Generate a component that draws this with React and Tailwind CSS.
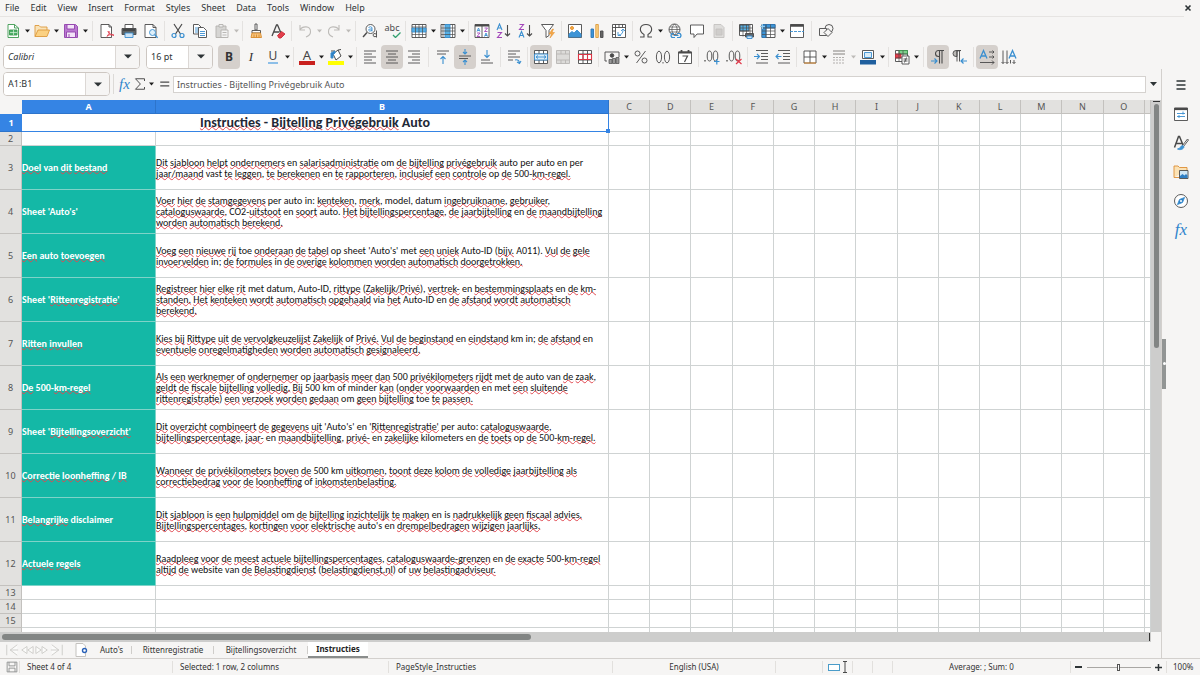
import React, { useState } from 'react';

const INK = '#4a4a4a';
const BLUE = '#3a8fd0';

const Icon = ({ children, className = 'w-4 h-4' }) => (
  <svg
    className={className}
    viewBox="0 0 16 16"
    fill="none"
    stroke={INK}
    strokeWidth="0.9"
    aria-hidden="true"
  >
    {children}
  </svg>
);

const icons = {
  new: (
    <>
      <path d="M3 1.5h6.5L13.5 5v9.5H3z" fill="#fff" stroke="#3d9a50" />
      <path d="M9.5 1.5V5h4" stroke="#3d9a50" />
      <path d="M4.5 7h7.5v5h-7.5z" fill="#4caf68" stroke="#3d9a50" />
      <path d="M5 9.5h7M8.5 7v5" stroke="#d8f0dc" strokeWidth="0.7" />
    </>
  ),
  open: (
    <>
      <path d="M1 13.5v-11h4l1.5 1.5h6.5v3" fill="#f9e3b8" stroke="#dd9a3c" />
      <path d="M1 13.5l3-6.5h11.5l-2.5 6.5z" fill="#fbd182" stroke="#dd9a3c" />
    </>
  ),
  save: (
    <>
      <path d="M1.5 1.5h11l2 2v11h-13z" fill="#b978d0" stroke="#9141ac" />
      <path d="M4 1.5h7.5v4.5h-7.5z" fill="#f3e3f8" stroke="#9141ac" />
      <path d="M3.5 14.5v-5.5h9v5.5z" fill="#f3e3f8" stroke="#9141ac" />
      <path d="M6 11v3.5" stroke="#9141ac" />
    </>
  ),
  pdf: (
    <>
      <path d="M2 1.5h8l2.5 2.5v10.5H2z" fill="#fff" />
      <path d="M10 1.5V4h2.5" />
      <path d="M10 8c1 3-1 5-2.5 6M9 8c0 3 4 3.5 6 4M8 12.5c2-1 4.500-1 7 0" stroke="#e0394a" />
    </>
  ),
  print: (
    <>
      <path d="M4 1.5h8v4H4z" fill="#fff" />
      <path d="M1 5.5h14v6H1z" fill="#5f6567" />
      <path d="M2 7h12" stroke="#3a3a3a" strokeWidth="1.4" />
      <path d="M4 10h8v4.5H4z" fill="#cfe4f4" stroke={BLUE} />
    </>
  ),
  preview: (
    <>
      <path d="M2 1.5h8l3 3v10H2z" fill="#fff" />
      <path d="M10 1.5v3h3" />
      <circle cx="9.5" cy="9.5" r="3" stroke={BLUE} fill="#dff0fa" />
      <path d="M11.7 11.7l3 3" stroke={BLUE} strokeWidth="1.3" />
    </>
  ),
  cut: (
    <>
      <path d="M4 1l6.5 10M12 1L5.5 11" stroke={INK} strokeWidth="1.2" />
      <circle cx="4" cy="12.5" r="2" stroke={BLUE} strokeWidth="1.2" />
      <circle cx="12" cy="12.5" r="2" stroke={BLUE} strokeWidth="1.2" />
    </>
  ),
  copy: (
    <>
      <path d="M1.5 1.5h5l2.5 2.5v7h-7.5z" fill="#fff" />
      <path d="M3 5h4M3 7h4M3 9h4" stroke={BLUE} />
      <path d="M6.5 4.5h5l3 3v7h-8z" fill="#fff" />
      <path d="M8 8.5h5M8 10.5h5M8 12.5h5" stroke={BLUE} />
    </>
  ),
  paste: (
    <>
      <path d="M2 3h10v11.5H2z" fill="#d6d5d3" stroke="#b3b1ae" />
      <path d="M5 1.5h4V4H5z" fill="#eee" stroke="#b3b1ae" />
      <path d="M7 7h7v7.5H7z" fill="#f4f4f4" stroke="#b3b1ae" />
      <path d="M8.5 9.5h4M8.5 12h4" stroke="#b3b1ae" />
    </>
  ),
  clone: (
    <>
      <path d="M7 1h2v6H7z" fill="#fff" />
      <path d="M4 7.5h8.5v2.5H4z" fill="#fff" />
      <path d="M4 10h8.5l1 4.5H3z" fill="#f6c37c" stroke="#d98a2b" />
      <path d="M6 11.5v3M8.5 11.5v3M11 11.5v3" stroke="#d98a2b" />
    </>
  ),
  clear: (
    <>
      <path d="M2 13L6.5 2h1L11 10M3.5 9h6" strokeWidth="1.3" />
      <path d="M7.5 12.5l4-4 3.5 2.5-4 4h-2z" fill="#e2404c" stroke="#c92a38" />
    </>
  ),
  undo: <path d="M3 2v5h5M3 7c2-4 11-5 10.5 2 0 2-2 4-4.5 5" stroke="#bdbbb8" strokeWidth="1.1" />,
  redo: <path d="M13 2v5H8M13 7C11 3 2 2 2.5 9c0 2 2 4 4.5 5" stroke="#bdbbb8" strokeWidth="1.1" />,
  find: (
    <>
      <circle cx="8.5" cy="6" r="4.5" fill="#fff" />
      <path d="M5 9.5L1 14" strokeWidth="1.4" />
      <path d="M6.5 4.5q2-1.5 3.5 0V8.5M10 6q-3.5-.5-3.5 1.2 1 2 3.5 0" stroke={BLUE} />
      <path d="M14.5 7.5v7M14.5 11q-3.5-1.5-3.5 1t3.5 1.5" />
    </>
  ),
  row: (
    <>
      <path d="M1 1.5h14v13H1z" fill="#fff" />
      <path d="M1 5h14v4H1z" fill="#56b0e4" stroke={BLUE} />
      <path d="M4.5 1.5v13M8 1.5v13M11.5 1.5v13M1 11.5h14M1 4h14" strokeWidth="0.7" />
    </>
  ),
  col: (
    <>
      <path d="M1 1.5h14v13H1z" fill="#fff" />
      <path d="M5 1.5h5v13H5z" fill="#56b0e4" stroke={BLUE} />
      <path d="M1 5h14M1 8h14M1 11.5h14M3 1.5v13M12.5 1.5v13" strokeWidth="0.7" />
    </>
  ),
  sort: (
    <>
      <path d="M1 1.5h14v13H1zM8 3v11.5" fill="#fff" />
      <path d="M1 2.5h14" strokeWidth="2" />
      <path d="M3 8.5L4.5 5 6 8.5M3.5 7.5h2M10.5 13.5L12 10l1.5 3.5M11 12.5h2" stroke={BLUE} />
      <path d="M3 10h3l-3 3.5h3M10.5 5h3l-3 3.5h3" stroke="#a347ba" />
    </>
  ),
  asc: (
    <>
      <path d="M1 7L3.5 1 6 7M2 5h3" stroke={BLUE} strokeWidth="1.1" />
      <path d="M1.5 9.5H5.5l-4 5H6" stroke="#a347ba" strokeWidth="1.1" />
      <path d="M11.5 2v11M9 10.5l2.5 2.5 2.5-2.5" strokeWidth="1.1" />
    </>
  ),
  desc: (
    <>
      <path d="M1.5 1.5H5.5l-4 5H6" stroke="#a347ba" strokeWidth="1.1" />
      <path d="M1 14.5L3.5 8.5 6 14.5M2 12.5h3" stroke={BLUE} strokeWidth="1.1" />
      <path d="M11.5 2v11M9 10.5l2.5 2.5 2.5-2.5" strokeWidth="1.1" />
    </>
  ),
  filter: (
    <>
      <path d="M1.5 1.5h12l-4.5 6v5l-3 2v-7z" fill="#fff" />
      <path d="M12.5 6l-3.5 5h2.5l-1.5 4 4.5-5.5h-2.5l1.5-3.5z" fill="#f5a94a" stroke="#e28a24" strokeWidth="0.5" />
    </>
  ),
  image: (
    <>
      <path d="M1.5 1.5h13v13h-13z" fill="#fff" />
      <circle cx="5" cy="5" r="1.5" fill="#f5b04a" stroke="#e28a24" />
      <path d="M2 13v-2l3-2.5 2 1.5 3-3 4 4v3H2z" fill="#3d94d6" stroke={BLUE} />
    </>
  ),
  chart: (
    <>
      <path d="M2 6h2.5v8.5H2z" fill="#3d94d6" stroke="#2c77b5" />
      <path d="M6.8 1.5h2.5v13H6.8z" fill="#fbd182" stroke="#dd9a3c" />
      <path d="M11.5 8h2.5v6.5h-2.5z" fill="#666" />
    </>
  ),
  pivot: (
    <>
      <path d="M1.5 1.5h13v13h-13zM1.5 4.5h13M4.5 1.5v13M8 1.5v3M11.5 1.5v3M1.5 8h3M1.5 11.5h3" fill="#fff" />
      <path d="M7 9v3.5h3M7.5 12c3 0 4.5-2 4.5-5M10 8l2-2 2 2" stroke={BLUE} />
    </>
  ),
  omega: <path d="M2 14h4v-2.5C0 8 2 1.5 8 1.5s8 6.5 2 10V14h4" strokeWidth="1.1" />,
  link: (
    <>
      <circle cx="7.5" cy="6.5" r="5.5" fill="#fff" />
      <path d="M2 6.5h11M7.5 1c-3.5 3-3.5 8 0 11M7.5 1c3.5 3 3.5 8 0 11M3 4h9M3 9h9" strokeWidth="0.7" />
      <path d="M7 10.5H5q-2 2 0 4h3M10 10.5h3q2 2 0 4h-3M7 12.5h4.5" stroke={BLUE} strokeWidth="1.2" />
    </>
  ),
  comment: <path d="M1.5 2h13v9H8l-3 3.5V11H1.5z" fill="#fff" />,
  header: (
    <>
      <path d="M3 1.5h7l3 3v10H3z" fill="#dedddb" stroke="#c4c2bf" />
      <path d="M5 6h6v6H5z" fill="#cfcdcb" stroke="#c4c2bf" />
    </>
  ),
  printArea: (
    <>
      <path d="M1.5 1.5h13v11h-13z" fill="#fff" />
      <path d="M2 2h9v6H2z" fill="#56b0e4" />
      <path d="M1.5 5h13M1.5 8h13M5 1.5v12M8.5 1.5v12M12 1.5v12" strokeWidth="0.7" />
      <path d="M7.5 10.5h8v3.5h-8z" fill="#60656a" />
      <path d="M9 13h5v2.5H9z" fill="#cfe4f4" stroke={BLUE} />
    </>
  ),
  freeze: (
    <>
      <path d="M2 1.5h13v13H2z" fill="#fff" />
      <path d="M2 1.5h4v13H2zM6 1.5h9V5H6z" fill="#3d94d6" stroke="#2c77b5" />
      <path d="M2 5h13M2 8h13M2 11.5h13M6 1.5v13M10.5 1.5v13" strokeWidth="0.7" />
      <path d="M0 3.5h5M2.5 1v5" stroke="#9ad0f0" />
    </>
  ),
  split: (
    <>
      <path d="M1.5 1.5h13v13h-13z" fill="#fff" />
      <path d="M1.5 2.5h13" strokeWidth="2.5" />
      <path d="M1 8.5h14" stroke={BLUE} strokeDasharray="3 1" />
    </>
  ),
  shapes: (
    <>
      <circle cx="11" cy="5.5" r="4" />
      <path d="M1.5 5.5h7v7h-7z" fill="#f6f5f4" />
      <path d="M10 5.5l4 4-4 4-4-4z" fill="#f6f5f4" />
    </>
  ),
  left: <path d="M2 2h12M2 5h8M2 8h12M2 11h8M2 14h12" />,
  center: <path d="M2 2h12M4 5h8M2 8h12M4 11h8M2 14h12" />,
  right: <path d="M2 2h12M6 5h8M2 8h12M6 11h8M2 14h12" />,
  top: (
    <>
      <path d="M2 2h12M2 5h9" />
      <path d="M8 15V7.5M5.5 10L8 7.5l2.5 2.5" stroke={BLUE} strokeWidth="1.1" />
    </>
  ),
  middle: (
    <>
      <path d="M2 7h12M2 9.5h9" />
      <path d="M8 0v5M6 3l2 2 2-2M8 16v-5M6 13l2-2 2 2" stroke={BLUE} strokeWidth="1.1" />
    </>
  ),
  bottom: (
    <>
      <path d="M2 11h9M2 14h12" />
      <path d="M8 1v7.5M5.5 6L8 8.5 10.5 6" stroke={BLUE} strokeWidth="1.1" />
    </>
  ),
  wrap: (
    <>
      <path d="M2 2h12M2 5h8M2 8h12M2 11h5" />
      <path d="M9 11q4-1 4.5 3M11 13l2.5 1.5 1.5-2.5" stroke={BLUE} strokeWidth="1.1" />
    </>
  ),
  merge: (
    <>
      <path d="M1.5 1.5h13v13h-13zM1.5 5h13M1.5 11h13M6 1.5V5M10.5 1.5V5M6 11v3.5M10.5 11v3.5" fill="#fff" />
      <path d="M1.5 5h13v6h-13z" fill="#d9ecf8" stroke={BLUE} />
      <path d="M3 8h10M5 6.5L3 8l2 1.5M11 6.5L13 8l-2 1.5" stroke={BLUE} />
    </>
  ),
  mergeOff: <path d="M1.5 1.5h13v13h-13zM1.5 5h13M1.5 11h13M6 1.5V5M10.5 1.5V5M6 11v3.5M10.5 11v3.5" fill="#dcdbd9" stroke="#b8b6b3" />,
  unmerge: (
    <>
      <path d="M1.5 1.5h13v13h-13zM1.5 5h13M1.5 11h13M6 1.5v13M10.5 1.5v13" fill="#fff" />
      <path d="M1.5 5.5h13v5h-13zM6 5.5v5M10.5 5.5v5" stroke="#dc3545" strokeWidth="1.1" />
    </>
  ),
  currency: (
    <>
      <path d="M15 8V3H1v9h2" />
      <circle cx="8" cy="6.500" r="1.8" fill="#4a4a4a" />
      <path d="M5 10.5h3v4H5zM8.500 9.5h3v5h-3zM12 8.5h3v6h-3z" fill="#999" strokeWidth="0.7" />
    </>
  ),
  percent: (
    <>
      <circle cx="4.5" cy="4.5" r="2.5" />
      <circle cx="11.5" cy="11.5" r="2.5" />
      <path d="M12.5 2L3.5 14" />
    </>
  ),
  number: (
    <>
      <ellipse cx="4" cy="8" rx="2.6" ry="5.8" />
      <ellipse cx="12" cy="8" rx="2.6" ry="5.8" />
      <path d="M8 13v1.5" />
    </>
  ),
  date: (
    <>
      <path d="M1.5 3h13v11.5h-13z" fill="#fff" />
      <path d="M1.5 3.5h13M4.5 1v3M11.5 1v3" strokeWidth="1.8" />
      <path d="M5.5 7h5l-3 6" strokeWidth="1.2" />
    </>
  ),
  addDecimal: (
    <>
      <ellipse cx="5.5" cy="7" rx="2.3" ry="5" />
      <ellipse cx="11.5" cy="7" rx="2.3" ry="5" />
      <path d="M1 11v1.5" strokeWidth="1.3" />
      <path d="M10 12.5h5.5M12.8 10v5.5" stroke={BLUE} strokeWidth="1.2" />
    </>
  ),
  delDecimal: (
    <>
      <ellipse cx="5.5" cy="7" rx="2.3" ry="5" />
      <ellipse cx="11.5" cy="7" rx="2.3" ry="5" />
      <path d="M1 11v1.5" strokeWidth="1.3" />
      <path d="M10 10l5.5 5M15.5 10L10 15" stroke="#e0394a" strokeWidth="1.2" />
    </>
  ),
  indent: (
    <>
      <path d="M3 1.5h12M8 4.5h7M8 7.5h7M8 10.5h7M3 14h12" />
      <path d="M1 7.5h5.5M4 5l2.5 2.5L4 10" stroke={BLUE} strokeWidth="1.1" />
    </>
  ),
  outdent: (
    <>
      <path d="M3 1.5h12M8 4.5h7M8 7.5h7M8 10.5h7M3 14h12" />
      <path d="M1 7.5h5.5M3.5 5L1 7.5 3.5 10" stroke={BLUE} strokeWidth="1.1" />
    </>
  ),
  borders: (
    <>
      <path d="M2 2h12v12H2zM8 2v12M2 8h12" fill="#fff" />
      <path d="M2 14h12" stroke="#e28a24" />
    </>
  ),
  lineStyle: (
    <>
      <path d="M2 2h12M2 5h12" stroke="#aaa8a5" strokeWidth="1.4" />
      <path d="M2 8.5h12M2 11h12M2 14h12" stroke="#aaa8a5" strokeDasharray="2 1" />
    </>
  ),
  borderColor: (
    <>
      <path d="M2.5 1.5h11v8h-11z" fill="#fff" />
      <path d="M4.5 3.5h7v5h-7z" fill="#d9ecf8" stroke={BLUE} />
      <path d="M0 11h16v4.5H0z" fill="#1f5f9e" stroke="none" />
    </>
  ),
  conditional: (
    <>
      <path d="M1.5 1.5h12v11h-12z" fill="#fff" />
      <path d="M5 1.5h8.5V5H5z" fill="#7fd18d" stroke="#3d9a50" />
      <path d="M1.5 5H7v4H1.5z" fill="#e2404c" stroke="#c92a38" />
      <path d="M1.5 5h12M1.5 9h12M5 1.5v11M9 1.5v11" strokeWidth="0.7" />
      <path d="M8 7h7v8H8z" fill="#fff" />
      <path d="M9.5 10h4M9.5 12h4M12.5 8.5l-2 5" />
    </>
  ),
  ltr: (
    <>
      <path d="M14 1.5H8.5a3 3 0 000 6H9M9.5 1.5v13M12 1.5v13" strokeWidth="1.1" />
      <path d="M1 12h5.5M4.5 9.5L7 12l-2.5 2.5" stroke={BLUE} strokeWidth="1.2" />
    </>
  ),
  rtl: (
    <>
      <path d="M9 1.5H4a3 3 0 000 6H5V2z" fill="#bbb9b6" />
      <path d="M5 1.5v11M7.5 1.5v11" />
      <path d="M9 12h6M11.5 9.5L9 12l2.5 2.5" stroke={BLUE} strokeWidth="1.2" />
    </>
  ),
  textH: (
    <>
      <path d="M1 9.5L4.5 1.5 8 9.5M2.5 7h4" stroke={BLUE} strokeWidth="1.3" />
      <path d="M10 3h5M13.5 1.5L15 3l-1.5 1.5M10 8h5M13.5 6.5L15 8l-1.5 1.5M1 13.5h14M13 11.5l2 2-2 2" />
    </>
  ),
  textV: (
    <>
      <path d="M8 9.5L11.5 1.5 15 9.5M9.5 7h4" stroke={BLUE} strokeWidth="1.3" />
      <path d="M2 1.5v13M.5 13L2 14.5 3.5 13M6 1.5v13M4.5 13L6 14.5 7.5 13M13 11v3.5M11.5 13l1.5 1.5 1.5-1.5M9.5 11v3.5" />
    </>
  ),
  menu: <path d="M3.5 4h9M3.5 8h9M3.5 12h9" stroke="#2e3436" strokeWidth="1.4" />,
  properties: (
    <>
      <path d="M1.5 2h13v12.5h-13z" fill="#fff" />
      <path d="M1.5 3h13" strokeWidth="2.2" />
      <path d="M4 7.5h8M4 10.5h8M10 5.5v3M6 9v3" stroke={BLUE} />
    </>
  ),
  stylesDeck: (
    <>
      <path d="M1.5 12.5L5.5 1.5h1L10 10M3 8.5h6" strokeWidth="1.5" />
      <path d="M14.5 4L9.5 10.5l1 1L15.5 5z" fill="#fff" />
      <path d="M9.5 10.5c-2 0-1.5 3-5 3.5 3 1.5 6.5 0 6.5-2.5z" fill="#3d94d6" stroke={BLUE} />
    </>
  ),
  gallery: (
    <>
      <path d="M1 13.5v-11.5h4l1.5 1.5h7.5v3" fill="#fbe2b5" stroke="#dd8f35" />
      <path d="M1 13.5h5" stroke="#dd8f35" />
      <path d="M6.5 6.5h8.5v8H6.5z" fill="#cfe7f6" />
      <path d="M7 14v-2l2.5-2 2 1.5L13 10l1.5 1.5V14z" fill="#2f7fc4" stroke="none" />
    </>
  ),
  navigator: (
    <>
      <circle cx="8" cy="8" r="6.5" fill="#fff" />
      <path d="M11.5 4.5L9.5 9.5 4.5 11.5 6.5 6.5z" fill="#2f7fc4" stroke={BLUE} />
      <circle cx="8" cy="8" r="1" fill="#fff" stroke="none" />
    </>
  ),
};

const glyphIcons = {
  spell: (
    <span className="flex flex-col items-center text-[9px] leading-[9px] text-[#4a4a4a]">
      abc
      <svg className="ml-2 h-[6px] w-[9px]" viewBox="0 0 9 6" fill="none" aria-hidden="true">
        <path d="M1 3l2.5 2.5L8.5.5" stroke="#33a06f" strokeWidth="1.3" />
      </svg>
    </span>
  ),
  bold: <span className="text-[12px] font-bold text-[#333]">B</span>,
  italic: <span className="font-['Liberation_Serif',serif] text-[13px] text-[#333] italic">I</span>,
  underline: (
    <span className="border-b-2 border-[#8dbfe8] px-px text-[12px] leading-[12px] text-[#444]">U</span>
  ),
  fontColor: (
    <span className="flex flex-col items-center text-[13px] leading-[12px] text-[#444]">
      A
      <span className="h-[4px] w-[16px] bg-[#c9211e]" />
    </span>
  ),
  highlight: (
    <span className="flex flex-col items-center">
      <svg className="h-[12px] w-[14px]" viewBox="0 0 14 12" fill="none" aria-hidden="true">
        <path d="M4 5l5-4 3 6-5 4z" fill="#fff" stroke={INK} />
        <path d="M9 1l3-.5M2 2h4" stroke={INK} />
        <path d="M2 9V4l4-2v2L4 6v3z" fill="#2f7fc4" stroke={BLUE} />
      </svg>
      <span className="h-[4px] w-[16px] bg-[#ffff00]" />
    </span>
  ),
};

const Caret = ({ off, label }) => (
  <button type="button" aria-label={label} className="flex h-6 w-[7px] items-center justify-center">
    <svg className="h-[4px] w-[5px]" viewBox="0 0 5 4" aria-hidden="true">
      <path d="M0 .5h5L2.5 3.5z" fill={off ? '#bdbbb8' : '#1f1f1f'} />
    </svg>
  </button>
);

const ToolButton = ({ item }) => {
  const [name, label, opts = ''] = item;
  const active = opts.includes('active');
  return (
    <>
      <button
        type="button"
        aria-label={label}
        aria-pressed={active || undefined}
        className={`flex h-6 w-[22px] items-center justify-center rounded-sm ${active ? 'bg-[#d5d0cc]' : ''}`}
      >
        {glyphIcons[name] || <Icon>{icons[name]}</Icon>}
      </button>
      {opts.includes('menu') && <Caret label={`${label} options`} off={opts.includes('off')} />}
    </>
  );
};

const Toolbar = ({ items }) => (
  <>
    {items.map((item, i) => {
      if (item === '|' || item === '||') {
        return (
          <span key={i} className={`flex justify-center ${item === '|' ? 'w-[5px]' : 'w-[7px]'}`}>
            <span className="h-5 w-px bg-[#e4e2e0]" />
          </span>
        );
      }
      return <ToolButton key={i} item={item} />;
    })}
  </>
);

const standardBar = [
  ['new', 'New', 'menu'], ['open', 'Open', 'menu'], ['save', 'Save', 'menu'], '||',
  ['pdf', 'Export as PDF'], ['print', 'Print'], ['preview', 'Print Preview'], '|',
  ['cut', 'Cut'], ['copy', 'Copy'], ['paste', 'Paste', 'menu off'], '|',
  ['clone', 'Clone Formatting'], ['clear', 'Clear Formatting'], '|',
  ['undo', 'Undo', 'menu off'], ['redo', 'Redo', 'menu off'], '||',
  ['find', 'Find and Replace'], ['spell', 'Spelling'], '|',
  ['row', 'Row', 'menu'], ['col', 'Column', 'menu'], '|',
  ['sort', 'Sort'], ['asc', 'Sort Ascending'], ['desc', 'Sort Descending'], ['filter', 'AutoFilter'], '|',
  ['image', 'Insert Image'], ['chart', 'Insert Chart'], ['pivot', 'Pivot Table'], '|',
  ['omega', 'Special Character', 'menu'], ['link', 'Hyperlink'], ['comment', 'Comment'], ['header', 'Headers and Footers'], '|',
  ['printArea', 'Define Print Area'], ['freeze', 'Freeze', 'menu'], ['split', 'Split Window'], '||',
  ['shapes', 'Draw Functions'],
];

const formattingBar = [
  ['bold', 'Bold', 'active'], ['italic', 'Italic'], ['underline', 'Underline', 'menu'], '|',
  ['fontColor', 'Font Color', 'menu'], ['highlight', 'Background Color', 'menu'], '|',
  ['left', 'Align Left'], ['center', 'Center Horizontally', 'active'], ['right', 'Align Right'], '||',
  ['top', 'Align Top'], ['middle', 'Center Vertically', 'active'], ['bottom', 'Align Bottom'], '|',
  ['wrap', 'Wrap Text'], '|',
  ['merge', 'Merge and Center', 'active'], ['mergeOff', 'Merge Cells'], ['unmerge', 'Unmerge Cells'], '|',
  ['currency', 'Currency', 'menu'], ['percent', 'Percent'], ['number', 'Number'], ['date', 'Date'], '|',
  ['addDecimal', 'Add Decimal Place'], ['delDecimal', 'Delete Decimal Place'], '|',
  ['indent', 'Increase Indent'], ['outdent', 'Decrease Indent'], '|',
  ['borders', 'Borders', 'menu'], ['lineStyle', 'Border Style', 'menu off'], ['borderColor', 'Border Color', 'menu'], '|',
  ['conditional', 'Conditional', 'menu'], '||',
  ['ltr', 'Left-To-Right', 'active'], ['rtl', 'Right-To-Left'], '|',
  ['textH', 'Text direction left to right', 'active'], ['textV', 'Text direction top to bottom'],
];

const menus = ['File', 'Edit', 'View', 'Insert', 'Format', 'Styles', 'Sheet', 'Data', 'Tools', 'Window', 'Help'];

const TITLE = 'Instructies - Bijtelling Privégebruik Auto';

const rows = [
  ['Doel van dit bestand', ['Dit sjabloon helpt ondernemers en salarisadministratie om de bijtelling privégebruik auto per auto en per', 'jaar/maand vast te leggen, te berekenen en te rapporteren, inclusief een controle op de 500-km-regel.']],
  ["Sheet 'Auto's'", ['Voer hier de stamgegevens per auto in: kenteken, merk, model, datum ingebruikname, gebruiker,', 'cataloguswaarde, CO2-uitstoot en soort auto. Het bijtellingspercentage, de jaarbijtelling en de maandbijtelling', 'worden automatisch berekend.']],
  ['Een auto toevoegen', ["Voeg een nieuwe rij toe onderaan de tabel op sheet 'Auto's' met een uniek Auto-ID (bijv. A011). Vul de gele", 'invoervelden in; de formules in de overige kolommen worden automatisch doorgetrokken.']],
  ["Sheet 'Rittenregistratie'", ['Registreer hier elke rit met datum, Auto-ID, rittype (Zakelijk/Privé), vertrek- en bestemmingsplaats en de km-', 'standen. Het kenteken wordt automatisch opgehaald via het Auto-ID en de afstand wordt automatisch', 'berekend.']],
  ['Ritten invullen', ['Kies bij Rittype uit de vervolgkeuzelijst Zakelijk of Privé. Vul de beginstand en eindstand km in; de afstand en', 'eventuele onregelmatigheden worden automatisch gesignaleerd.']],
  ['De 500-km-regel', ['Als een werknemer of ondernemer op jaarbasis meer dan 500 privékilometers rijdt met de auto van de zaak,', 'geldt de fiscale bijtelling volledig. Bij 500 km of minder kan (onder voorwaarden en met een sluitende', 'rittenregistratie) een verzoek worden gedaan om geen bijtelling toe te passen.']],
  ["Sheet 'Bijtellingsoverzicht'", ["Dit overzicht combineert de gegevens uit 'Auto's' en 'Rittenregistratie' per auto: cataloguswaarde,", 'bijtellingspercentage, jaar- en maandbijtelling, privé- en zakelijke kilometers en de toets op de 500-km-regel.']],
  ['Correctie loonheffing / IB', ['Wanneer de privékilometers boven de 500 km uitkomen, toont deze kolom de volledige jaarbijtelling als', 'correctiebedrag voor de loonheffing of inkomstenbelasting.']],
  ['Belangrijke disclaimer', ['Dit sjabloon is een hulpmiddel om de bijtelling inzichtelijk te maken en is nadrukkelijk geen fiscaal advies.', "Bijtellingspercentages, kortingen voor elektrische auto's en drempelbedragen wijzigen jaarlijks."]],
  ['Actuele regels', ['Raadpleeg voor de meest actuele bijtellingspercentages, cataloguswaarde-grenzen en de exacte 500-km-regel', 'altijd de website van de Belastingdienst (belastingdienst.nl) of uw belastingadviseur.']],
];

// Words the English spell checker accepts; everything else gets the red squiggle
const knownWords = new Set([
  'a', 'auto', "auto's", 'auto-id', 'co', 'datum', 'disclaimer', 'en', 'in', 'is', 'kilometers', 'km',
  'met', 'minder', 'model', 'of', 'om', 'op', 'per', 'sheet', 'toe', 'van', 'vast', 'via', 'website',
]);

const Spelled = ({ text }) =>
  text.split(/([A-Za-zÀ-ÿ][A-Za-zÀ-ÿ'./-]*)/).map((part, i) => {
    if (i % 2 === 0) return part;
    const word = part.replace(/['.-]+$/, '').toLowerCase();
    if (knownWords.has(word) && part !== 'km-') return part;
    return (
      <span
        key={i}
        className="underline decoration-[#e0474f] decoration-wavy decoration-[0.5px] -underline-offset-1 [text-decoration-skip-ink:none]"
      >
        {part}
      </span>
    );
  });

const columns = 'CDEFGHIJKLMNO'.split('');
const cell = 'border-r border-b border-[#cfd3d3] p-0';
const rowHead = 'border-r border-b border-[#c3c1be] bg-[#e2e1df] p-0 text-center font-normal text-[#555]';

const EmptyCells = () => [...columns, 'P'].map((c) => <td key={c} className={cell} />);

const Grid = () => (
  <div className="min-h-0 min-w-0 flex-1 overflow-hidden bg-white">
    <table className="w-full table-fixed border-separate border-spacing-0">
      <colgroup>
        <col className="w-[22px]" />
        <col className="w-[134px]" />
        <col className="w-[453px]" />
        {columns.map((c) => <col key={c} />)}
        <col className="w-[6px]" />
      </colgroup>
      <thead>
        <tr className="h-[14px] text-[9px] leading-[12px]">
          <td className="bg-[#f6f5f4] p-0" />
          <th scope="col" className="border-r border-b border-[#2d74cb] bg-[#3584e4] p-0 text-white">A</th>
          <th scope="col" className="border-r border-b border-[#2d74cb] bg-[#3584e4] p-0 text-white">B</th>
          {columns.map((c) => (
            <th key={c} scope="col" className={rowHead}>{c}</th>
          ))}
          <td className={rowHead} />
        </tr>
      </thead>
      <tbody className="text-[9px] leading-[12px]">
        <tr className="h-[18px]">
          <th scope="row" className="border-b border-[#2d74cb] bg-[#3584e4] p-0 text-center text-white">1</th>
          <td colSpan={2} className="relative border-r border-b border-[#3584e4] p-0 text-center font-['Carlito','Lato',sans-serif] text-[14px] leading-[17px] font-bold text-[#1f2937]">
            <Spelled text={TITLE} />
            <span className="absolute -right-0.5 -bottom-0.5 h-1 w-1 bg-[#3584e4]" />
          </td>
          <EmptyCells />
        </tr>
        <tr className="h-[14px]">
          <th scope="row" className={rowHead}>2</th>
          <td className={cell} />
          <td className={cell} />
          <EmptyCells />
        </tr>
        {rows.map(([label, lines], i) => (
          <tr key={label} className="h-[44px]">
            <th scope="row" className={rowHead}>{i + 3}</th>
            <td className="border-r border-b border-[#7fd3c8] bg-[#14b8a6] p-0 font-['Carlito','Lato',sans-serif] text-[10px] leading-[11px] font-bold whitespace-nowrap text-white">
              <Spelled text={label} />
            </td>
            <td className={`${cell} font-['Carlito','Lato',sans-serif] text-[10px] leading-[11px] whitespace-nowrap text-[#111]`}>
              {lines.map((line) => (
                <div key={line}><Spelled text={line} /></div>
              ))}
            </td>
            <EmptyCells />
          </tr>
        ))}
        {[13, 14, 15].map((n) => (
          <tr key={n} className="h-[14px]">
            <th scope="row" className={rowHead}>{n}</th>
            <td className={cell} />
            <td className={cell} />
            <EmptyCells />
          </tr>
        ))}
        <tr className="h-[14px]">
          <td className={rowHead} />
          <td className={cell} />
          <td className={cell} />
          <EmptyCells />
        </tr>
      </tbody>
    </table>
  </div>
);

const ComboBox = ({ label, value, className, inputClass = '' }) => {
  const [text, setText] = useState(value);
  return (
    <div className={`flex overflow-hidden rounded border border-[#cdc7c2] bg-white ${className}`}>
      <input
        aria-label={label}
        value={text}
        onChange={(e) => setText(e.target.value)}
        className={`min-w-0 flex-1 bg-white px-1 text-[#2e3436] outline-none ${inputClass}`}
      />
      <button
        type="button"
        aria-label={`${label} list`}
        className="flex w-6 items-center justify-center border-l border-[#dcd8d5] bg-[#f6f5f4]"
      >
        <svg className="h-[5px] w-[8px]" viewBox="0 0 8 5" aria-hidden="true">
          <path d="M0 .5h8L4 4.5z" fill="#2e3436" />
        </svg>
      </button>
    </div>
  );
};

const FormulaBar = () => {
  const [formula, setFormula] = useState(TITLE);
  return (
    <div className="flex h-[31px] items-center pb-px pl-[3px]">
      <ComboBox label="Name Box" value="A1:B1" className="h-6 w-[107px]" />
      <span className="mx-[3px] h-5 w-px bg-[#dcdad7]" />
      <button type="button" aria-label="Function Wizard" className="w-[15px] text-center font-['Liberation_Serif',serif] text-[15px] leading-[16px] text-[#2f84cc] italic">
        fx
      </button>
      <button type="button" aria-label="Select Function" className="flex w-4 items-center justify-center">
        <Icon className="h-[14px] w-3">
          <path d="M14 4V1H2l6.5 7L2 15h12v-3" strokeWidth="1.3" />
        </Icon>
      </button>
      <Caret label="Select Function options" />
      <button type="button" aria-label="Formula" className="flex w-[18px] items-center justify-center">
        <Icon className="h-3 w-3">
          <path d="M3 5.5h12M3 10.5h12" strokeWidth="1.8" />
        </Icon>
      </button>
      <input
        aria-label="Input line"
        value={formula}
        onChange={(e) => setFormula(e.target.value)}
        className="h-[17px] min-w-0 flex-1 border border-[#d5d2cf] bg-white px-[3px] text-[#555] outline-none"
      />
      <button type="button" aria-label="Expand Formula Bar" className="flex w-[15px] justify-center">
        <svg className="h-[4px] w-[7px]" viewBox="0 0 7 4" aria-hidden="true">
          <path d="M0 0h7L3.5 4z" fill="#2e3436" />
        </svg>
      </button>
    </div>
  );
};

const sheets = [
  ["Auto's", 'w-[41px]'],
  ['Rittenregistratie', 'w-[82px]'],
  ['Bijtellingsoverzicht', 'w-[94px]'],
];

const SheetTabs = () => (
  <div className="flex h-4 items-stretch text-[8px]">
    <div className="flex w-[70px] items-center justify-center">
      {[
        ['First sheet', 'M2 2v12M14 2L6 8l8 6M6 8h9'],
        ['Previous sheet', 'M8 4L2 8l6 4zM15 4L9 8l6 4z'],
        ['Next sheet', 'M1 4l6 4-6 4zM8 4l6 4-6 4z'],
        ['Last sheet', 'M14 2v12M2 2l8 6-8 6M10 8H1'],
      ].map(([label, d]) => (
        <button key={label} type="button" aria-label={label} className="w-[15px]">
          <Icon className="h-[14px] w-[14px]">
            <path d={d} stroke="#c6c4c1" fill="#fbfbfa" />
          </Icon>
        </button>
      ))}
    </div>
    <button type="button" aria-label="Add sheet" className="flex w-[21px] items-center justify-center">
      <svg className="h-[14px] w-[14px]" viewBox="0 0 14 14" fill="none" aria-hidden="true">
        <path d="M2 .5h7l2.5 2.5v10.5H2z" fill="#fff" stroke="#c4c2bf" />
        <circle cx="10.5" cy="7.5" r="2" fill="#fff" stroke="#2a62b8" strokeWidth="1.4" />
      </svg>
    </button>
    {sheets.map(([name, width]) => (
      <button key={name} type="button" className={`relative text-center text-[#333] ${width}`}>
        {name}
        <span className="absolute top-1 right-0 h-2 w-px bg-[#cfcdca]" />
      </button>
    ))}
    <button type="button" aria-current="page" className="w-[60px] border-b-2 border-[#8a8d8c] bg-white text-center font-bold text-[#222]">
      Instructies
    </button>
  </div>
);

const StatusBar = () => {
  const [zoom, setZoom] = useState(50);
  return (
    <footer className="grid h-[17px] grid-cols-[20px_153fr_216fr_224fr_163fr_47fr_30px_20px_20px_178fr_96px_33px] items-center border-t border-[#d3d0cd] text-[8px] text-[#333] *:h-3 *:border-r *:border-[#e2e0dd] *:leading-[12px] *:last:border-0">
      <div className="flex items-center justify-center pl-1">
        <Icon className="h-3 w-3">
          <path d="M1.5 1.5h13v13h-13zM4 1.5v5h8v-5M4 14.5v-5h8v5" stroke="#8d8f8f" strokeWidth="1.2" />
        </Icon>
      </div>
      <div className="pl-[7px]">Sheet 4 of 4</div>
      <div className="pl-[7px]">Selected: 1 row, 2 columns</div>
      <div className="pl-[7px]">PageStyle_Instructies</div>
      <div className="text-center">English (USA)</div>
      <div />
      <div className="flex items-center justify-center gap-0.5">
        <span className="h-[7px] w-3 border border-[#4a9cc9] bg-white" />
        <svg className="h-[12px] w-[6px]" viewBox="0 0 6 12" stroke={INK} aria-hidden="true">
          <path d="M1 .5h4M3 .5v11M1 11.5h4" />
        </svg>
      </div>
      <div />
      <div />
      <div className="text-center">Average: ; Sum: 0</div>
      <div className="flex items-center justify-center gap-1">
        <button type="button" aria-label="Zoom Out" className="flex w-2 items-center">
          <span className="h-0.5 w-[7px] bg-[#2e3436]" />
        </button>
        <input
          type="range"
          aria-label="Zoom"
          value={zoom}
          onChange={(e) => setZoom(e.target.value)}
          className="h-[7px] w-16 appearance-none bg-[linear-gradient(#a9a7a4,#a9a7a4)] bg-[length:100%_1px] bg-center bg-no-repeat [&::-webkit-slider-thumb]:h-[7px] [&::-webkit-slider-thumb]:w-[3px] [&::-webkit-slider-thumb]:appearance-none [&::-webkit-slider-thumb]:border [&::-webkit-slider-thumb]:border-[#555] [&::-webkit-slider-thumb]:bg-white"
        />
        <button type="button" aria-label="Zoom In" className="w-2">
          <svg className="h-[7px] w-[7px]" viewBox="0 0 7 7" stroke="#2e3436" strokeWidth="1.5" aria-hidden="true">
            <path d="M0 3.5h7M3.5 0v7" />
          </svg>
        </button>
      </div>
      <div className="pl-1.5">100%</div>
    </footer>
  );
};

const Sidebar = () => (
  <aside className="flex w-[34px] flex-col items-center gap-[13px] pt-2 pr-1">
    {[
      ['menu', 'Sidebar Settings'],
      ['properties', 'Properties'],
      ['stylesDeck', 'Styles'],
      ['gallery', 'Gallery'],
      ['navigator', 'Navigator'],
    ].map(([name, label]) => (
      <button key={name} type="button" aria-label={label} className="h-4 w-4">
        <Icon>{icons[name]}</Icon>
      </button>
    ))}
    <button type="button" aria-label="Functions" className="h-4 font-['Liberation_Serif',serif] text-[17px] leading-[16px] text-[#2f84cc] italic">
      fx
    </button>
  </aside>
);

const App = () => {
  return (
    <div className="flex h-screen flex-col overflow-hidden bg-[#f6f5f4] font-['Noto_Sans',sans-serif] text-[9px] text-[#2e3436]">
      <nav className="mr-4 flex h-[17px] items-center border-b border-[#e6e4e2] pl-[5px]">
        {menus.map((m) => (
          <button key={m} type="button" className="mr-[11px] leading-[12px]">{m}</button>
        ))}
        <button type="button" aria-label="Close document" className="-mr-3 ml-auto h-4 w-4">
          <Icon>
            <path d="M5.5 5.5l5 5M10.5 5.5l-5 5" stroke="#2e3436" strokeWidth="1.6" />
          </Icon>
        </button>
      </nav>

      <div role="toolbar" aria-label="Standard" className="flex h-[27px] items-center pl-0.5">
        <Toolbar items={standardBar} />
      </div>

      <div role="toolbar" aria-label="Formatting" className="flex h-[25px] items-center pl-[3px]">
        <ComboBox label="Font Name" value="Calibri" className="mr-1.5 h-6 w-[137px]" inputClass="italic" />
        <ComboBox label="Font Size" value="16 pt" className="mr-[5px] h-6 w-[67px]" />
        <Toolbar items={formattingBar} />
      </div>

      <div className="flex min-h-0 flex-1">
        <main className="flex min-w-0 flex-1 flex-col border-r border-[#d3d0cd]">
          <FormulaBar />
          <div className="flex min-h-0 flex-1">
            <Grid />
            <div className="flex w-[10px] flex-col items-center bg-[#cdcdcc] pt-px">
              <span className="mb-0.5 h-px w-[7px] bg-[#333]" />
              <span className="h-[46%] w-[5px] rounded-full bg-[#828584]" />
            </div>
          </div>
          <div className="mr-[10px] flex h-[10px] items-center justify-between bg-[#cdcdcc] pl-0.5">
            <span className="h-[6px] w-[46%] rounded-full bg-[#828584]" />
            <span className="mr-px h-2 w-px bg-[#333]" />
          </div>
          <SheetTabs />
        </main>
        <div className="flex w-1 items-center">
          <button type="button" aria-label="Hide sidebar" className="flex h-[50px] w-1 items-center justify-center bg-[#929594]">
            <span className="h-[3px] w-[3px] rounded-full bg-white" />
          </button>
        </div>
        <Sidebar />
      </div>

      <StatusBar />
    </div>
  );
};

export default App;
